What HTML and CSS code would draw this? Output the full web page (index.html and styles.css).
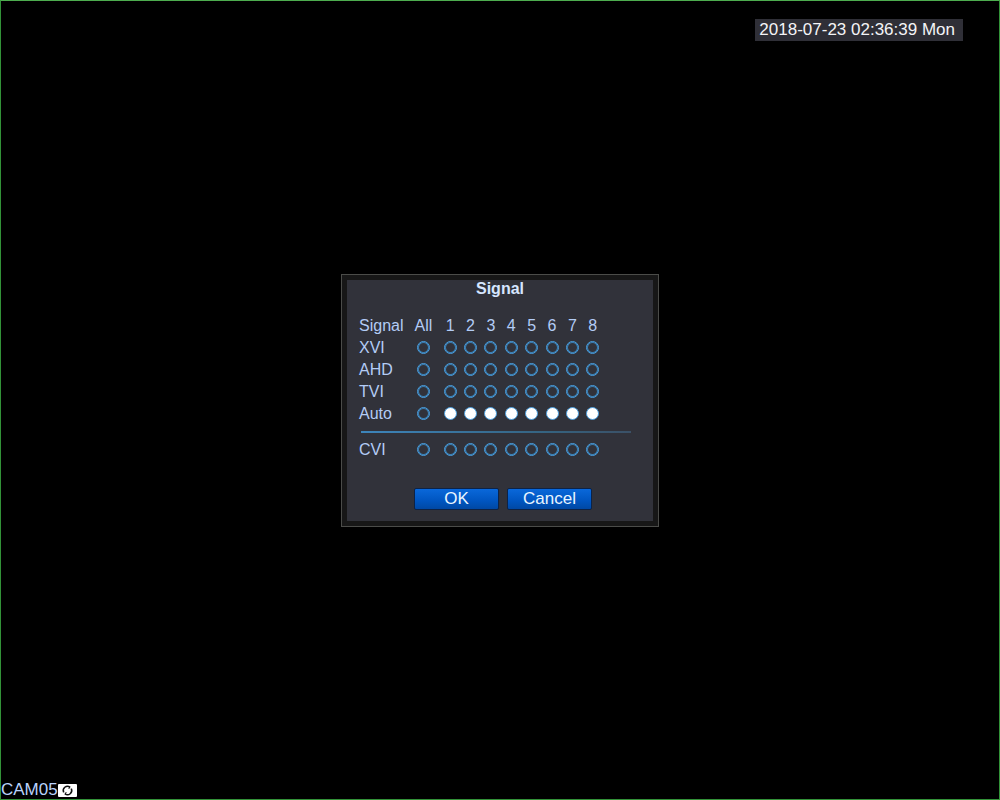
FILE: index.html
```html
<!DOCTYPE html>
<html lang="en">
<head>
<meta charset="utf-8">
<title>Signal</title>
<link rel="stylesheet" href="styles.css">
</head>
<body>
<div class="screen">
  <header class="topbar"><time class="clock" datetime="2018-07-23T02:36:39">2018-07-23 02:36:39 Mon</time></header>
  <main class="stage">
    <form class="dialog" role="dialog" aria-labelledby="title">
      <div class="panel">
        <h1 class="title" id="title">Signal</h1>
        <table class="signals">
          <colgroup><col class="col-name"><col class="col-all"><col span="8"></colgroup>
          <thead>
            <tr><th scope="col" class="name">Signal</th><th scope="col">All</th><th scope="col">1</th><th scope="col">2</th><th scope="col">3</th><th scope="col">4</th><th scope="col">5</th><th scope="col">6</th><th scope="col">7</th><th scope="col">8</th></tr>
          </thead>
          <tbody id="rows"></tbody>
        </table>
        <div class="actions">
          <button type="button" class="btn">OK</button>
          <button type="button" class="btn">Cancel</button>
        </div>
      </div>
    </form>
  </main>
  <footer class="camera">
    <span>CAM05</span>
    <svg class="cycle" viewBox="0 0 19 13" aria-hidden="true">
      <rect width="19" height="13" rx="1" fill="#fff"/>
      <path d="M5.7 8.4A4.3 4.3 0 0 1 12 3M13.3 4.6A4.3 4.3 0 0 1 7 10" fill="none" stroke="#111" stroke-width="1.5"/>
      <path d="M12.2 2V4.4H9.9zM6.8 11V8.6H9.1z" fill="#111"/>
    </svg>
  </footer>
</div>
<script src="app.js"></script>
</body>
</html>
```
FILE: styles.css
```css
* { box-sizing: border-box; }

body {
  margin: 0;
  background: #000;
  font-family: "Liberation Sans", Arial, sans-serif;
  font-size: 16px;
}

.screen {
  display: grid;
  grid-template-rows: auto 1fr auto;
  min-height: 100vh;
  border: 1px solid #329238;
  border-top-color: #4dad4f;
}

.topbar {
  grid-area: 1 / 1;
  display: flex;
  justify-content: flex-end;
  padding: 18px 36px 0 0;
}

.clock {
  padding: 0 8px 0 4px;
  background: #2f2f37;
  color: #f4f4f6;
  font-size: 17px;
  line-height: 22px;
}

.stage {
  grid-area: 1 / 1 / 4 / 2;
  display: flex;
  align-items: center;
  justify-content: center;
}

.dialog {
  width: 318px;
  padding: 5px;
  border: 1px solid #4b4c49;
  background: #171717;
}

.panel {
  padding: 0 12px 11px;
  background: #31323a;
}

.title {
  margin: 0 0 18px;
  color: #d6e6ff;
  font-size: 16px;
  line-height: 17px;
  text-align: center;
}

.signals {
  width: 244px;
  table-layout: fixed;
  border-collapse: collapse;
  color: #b3ccf6;
}

.col-name { width: 48px; }
.col-all { width: 33px; }

.signals th,
.signals td {
  height: 22px;
  padding: 0;
  font-weight: normal;
  line-height: 22px;
  text-align: center;
  vertical-align: middle;
}

.signals .name { text-align: left; }

.signals .divider {
  height: 14px;
  line-height: 0;
}

.divider hr {
  width: 270px;
  height: 2px;
  margin: 1px 0 0 2px;
  border: 0;
  background: linear-gradient(90deg, #3d85bb, #35627f 70%, #3b5167);
}

.radio {
  display: block;
  appearance: none;
  width: 13px;
  height: 13px;
  margin: 0 auto;
  border: 1px solid #4a9fe0;
  border-radius: 50%;
  box-shadow: inset 0 0 0 1px #3b80b5;
}

.radio:checked {
  background: #fff;
  box-shadow: none;
}

.actions {
  display: flex;
  gap: 8px;
  margin-top: 27px;
  padding-left: 55px;
}

.btn {
  width: 85px;
  height: 22px;
  padding: 0;
  border: 1px solid #0c2348;
  border-radius: 2px;
  background: linear-gradient(#0a68da, #0055c0 60%, #0048a4);
  color: #e8f5ff;
  font: 17px/20px "Liberation Sans", Arial, sans-serif;
}

.camera {
  grid-area: 3 / 1;
  display: flex;
  align-items: center;
  color: #b9d2fb;
  font-size: 17px;
  line-height: 18px;
}

.cycle {
  width: 19px;
  height: 13px;
}
```
FILE: app.js
```js
const body = document.getElementById("rows");
const channels = ["All", 1, 2, 3, 4, 5, 6, 7, 8];

for (const mode of ["XVI", "AHD", "TVI", "Auto", "CVI"]) {
  if (mode === "CVI") {
    body.insertAdjacentHTML("beforeend", '<tr><td class="divider" colspan="10"><hr></td></tr>');
  }
  const cells = channels.map((ch) => {
    const checked = mode === "Auto" && ch !== "All" ? " checked" : "";
    return `<td><input class="radio" type="radio" name="ch-${ch}" value="${mode}" aria-label="${mode}, ${ch}"${checked}></td>`;
  });
  body.insertAdjacentHTML("beforeend", `<tr><th scope="row" class="name">${mode}</th>${cells.join("")}</tr>`);
}
```
